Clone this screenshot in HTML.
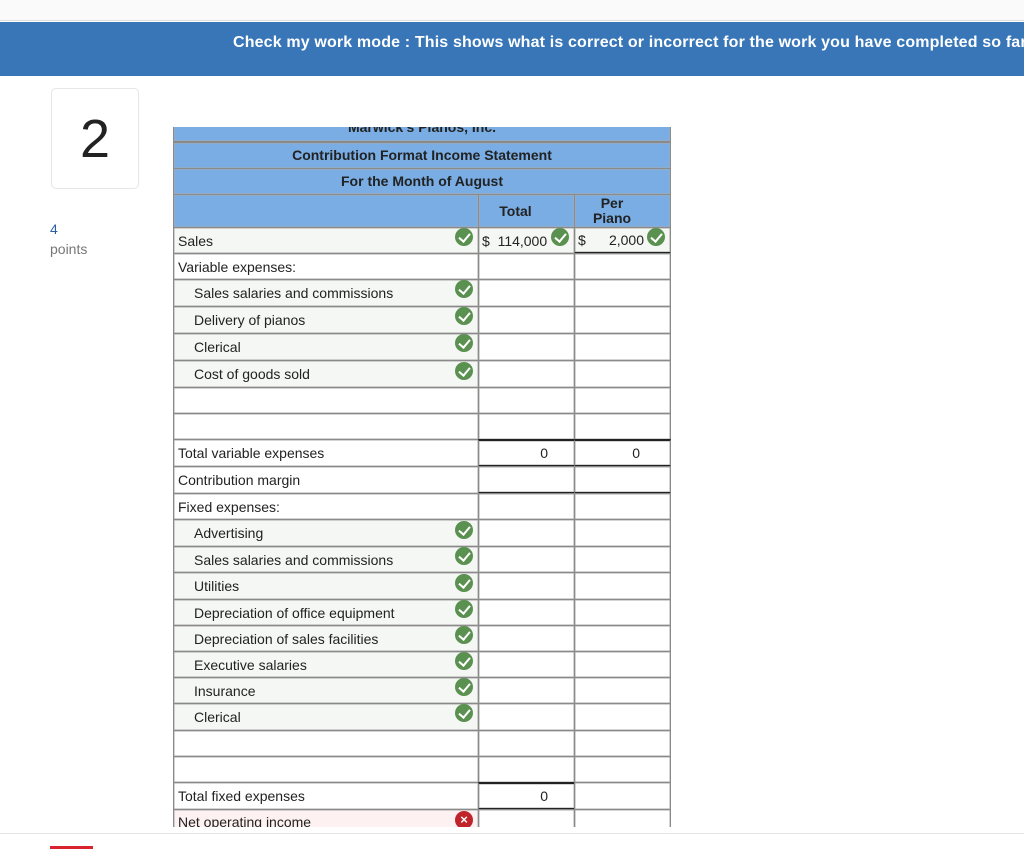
<!DOCTYPE html>
<html><head><meta charset="utf-8"><style>
*{margin:0;padding:0;box-sizing:border-box}
body{width:1024px;height:849px;overflow:hidden;background:#fff;font-family:"Liberation Sans",Arial,sans-serif;position:relative;color:#222}
.top{position:absolute;left:0;top:0;width:1024px;height:21px;background:#fafafa;border-bottom:1px solid #ddd}
.banner{position:absolute;left:0;top:22px;width:1024px;height:54px;background:#3876b8;color:#fff;font-weight:bold;font-size:16px;letter-spacing:0.15px;white-space:nowrap;overflow:hidden}
.banner span{position:absolute;left:233px;top:12px}
.qbox{position:absolute;left:51px;top:88px;width:88px;height:101px;border:1px solid #e6e6e6;border-radius:5px;font-size:54px;text-align:center;line-height:101px;color:#222}
.pts{position:absolute;left:50px;top:219px;font-size:14px;color:#777;line-height:20px}
.pts b{font-weight:normal;color:#2a5da8}
.tbl{position:absolute;left:173px;top:127px;width:498px;height:700px;overflow:hidden}
.r{position:absolute;left:0;width:498px;font-size:14px}
.c{position:absolute;top:0;height:100%;border:1px solid #8a8a8a;box-shadow:inset 0 0 0 0.5px #aaa}
.h{background:#79ade4;font-weight:bold;text-align:center;font-size:14px}
.lab{left:0;width:306px;padding-left:4px;display:flex;align-items:center}
.ind{padding-left:20px}
.t{left:305px;width:97px;text-align:right;padding-right:26px;display:flex;align-items:center;justify-content:flex-end}
.p{left:401px;width:97px;display:flex;align-items:center;justify-content:flex-end;padding-right:30px}
.g{background:#f4f7f3}
.k{position:absolute;width:18px;height:18px;border-radius:50%;background:#5b9150}
.k::after{content:"";position:absolute;left:6px;top:3px;width:5px;height:9px;border:solid #fff;border-width:0 2px 2px 0;transform:rotate(40deg)}
.x{position:absolute;width:18px;height:18px;border-radius:50%;background:#c0242b;color:#fff;font-size:13px;font-weight:bold;text-align:center;line-height:18px}
.bl{border-top:2px solid #222!important}
.bb{border-bottom:2px solid #222!important}
.bottom{position:absolute;left:0;top:833px;width:1024px;height:16px;background:#fff;border-top:1px solid #e5e5e5}
</style></head><body>
<div class="top"></div>
<div class="banner"><span>Check my work mode : This shows what is correct or incorrect for the work you have completed so far</span></div>
<div class="qbox">2</div>
<div class="pts"><b>4</b><br>points</div>

<div class="tbl">
<div class="r" style="top:-14px;height:29px"><div class="c h" style="left:0;width:498px;line-height:27px">Marwick's Pianos, Inc.</div></div>
<div class="r" style="top:15px;height:27px"><div class="c h" style="left:0;width:498px;line-height:25px">Contribution Format Income Statement</div></div>
<div class="r" style="top:41px;height:27px"><div class="c h" style="left:0;width:498px;line-height:25px">For the Month of August</div></div>
<div class="r" style="top:67px;height:34px"><div class="c h" style="left:0;width:306px"></div><div class="c h" style="left:305px;width:97px;line-height:32px;padding-right:22px">Total</div><div class="c h" style="left:401px;width:97px;line-height:15px;padding-top:1px;padding-right:21px">Per<br>Piano</div></div>

<div class="r" style="top:100px;height:27px"><div class="c lab g">Sales</div><div class="c t g" style="justify-content:flex-start;padding-left:3px">$&nbsp;&nbsp;114,000</div><div class="c p g bb" style="justify-content:space-between;padding-left:3px;padding-right:26px"><span>$</span><span>2,000</span></div></div>
<div class="k" style="left:282px;top:101px"></div><div class="k" style="left:378px;top:101px"></div><div class="k" style="left:474px;top:101px"></div>

<div class="r" style="top:126px;height:27px"><div class="c lab">Variable expenses:</div><div class="c t"></div><div class="c p"></div></div>
<div class="r" style="top:152px;height:28px"><div class="c lab g ind">Sales salaries and commissions</div><div class="c t"></div><div class="c p"></div></div>
<div class="r" style="top:179px;height:28px"><div class="c lab g ind">Delivery of pianos</div><div class="c t"></div><div class="c p"></div></div>
<div class="r" style="top:206px;height:28px"><div class="c lab g ind">Clerical</div><div class="c t"></div><div class="c p"></div></div>
<div class="r" style="top:233px;height:28px"><div class="c lab g ind">Cost of goods sold</div><div class="c t"></div><div class="c p"></div></div>
<div class="k" style="left:282px;top:153px"></div><div class="k" style="left:282px;top:180px"></div><div class="k" style="left:282px;top:207px"></div><div class="k" style="left:282px;top:235px"></div>
<div class="r" style="top:260px;height:27px"><div class="c lab"></div><div class="c t"></div><div class="c p"></div></div>
<div class="r" style="top:286px;height:27px"><div class="c lab"></div><div class="c t"></div><div class="c p"></div></div>
<div class="r" style="top:312px;height:28px"><div class="c lab">Total variable expenses</div><div class="c t bl bb">0</div><div class="c p bl bb">0</div></div>
<div class="r" style="top:339px;height:28px"><div class="c lab">Contribution margin</div><div class="c t bb"></div><div class="c p bb"></div></div>
<div class="r" style="top:366px;height:27px"><div class="c lab">Fixed expenses:</div><div class="c t"></div><div class="c p"></div></div>
<div class="r" style="top:392px;height:28px"><div class="c lab g ind">Advertising</div><div class="c t"></div><div class="c p"></div></div>
<div class="r" style="top:419px;height:27px"><div class="c lab g ind">Sales salaries and commissions</div><div class="c t"></div><div class="c p"></div></div>
<div class="r" style="top:445px;height:28px"><div class="c lab g ind">Utilities</div><div class="c t"></div><div class="c p"></div></div>
<div class="r" style="top:472px;height:27px"><div class="c lab g ind">Depreciation of office equipment</div><div class="c t"></div><div class="c p"></div></div>
<div class="r" style="top:498px;height:27px"><div class="c lab g ind">Depreciation of sales facilities</div><div class="c t"></div><div class="c p"></div></div>
<div class="r" style="top:524px;height:27px"><div class="c lab g ind">Executive salaries</div><div class="c t"></div><div class="c p"></div></div>
<div class="r" style="top:550px;height:27px"><div class="c lab g ind">Insurance</div><div class="c t"></div><div class="c p"></div></div>
<div class="r" style="top:576px;height:28px"><div class="c lab g ind">Clerical</div><div class="c t"></div><div class="c p"></div></div>
<div class="k" style="left:282px;top:394px"></div><div class="k" style="left:282px;top:420px"></div><div class="k" style="left:282px;top:447px"></div><div class="k" style="left:282px;top:473px"></div><div class="k" style="left:282px;top:499px"></div><div class="k" style="left:282px;top:525px"></div><div class="k" style="left:282px;top:551px"></div><div class="k" style="left:282px;top:577px"></div>
<div class="r" style="top:603px;height:27px"><div class="c lab"></div><div class="c t"></div><div class="c p"></div></div>
<div class="r" style="top:629px;height:27px"><div class="c lab"></div><div class="c t"></div><div class="c p"></div></div>
<div class="r" style="top:655px;height:28px"><div class="c lab">Total fixed expenses</div><div class="c t bl bb">0</div><div class="c p"></div></div>
<div class="r" style="top:682px;height:28px"><div class="c lab" style="background:#fdf1f1;align-items:flex-start;padding-top:4px">Net operating income</div><div class="c t"></div><div class="c p"></div></div>
<div class="x" style="left:282px;top:684px">×</div>
</div>
<div class="bottom"></div>
<div style="position:absolute;left:50px;top:846px;width:43px;height:3px;background:#d9232e"></div>
</body></html>
